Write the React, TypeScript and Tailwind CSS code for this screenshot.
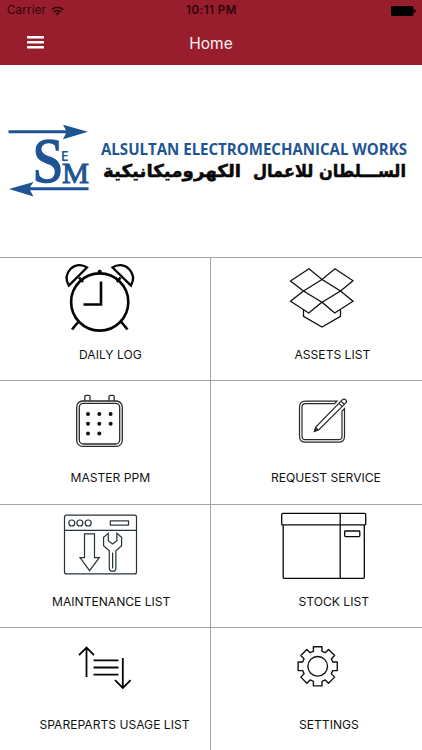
import type { ReactNode } from "react";

type TileProps = {
  label: string;
  labelClass: string;
  viewBox: string;
  right?: boolean;
  stroke?: string;
  strokeWidth?: number;
  children: ReactNode;
};

function Tile({ label, labelClass, viewBox, right, stroke = "#111", strokeWidth = 1.3, children }: TileProps) {
  return (
    <div className={`flex flex-col items-start overflow-hidden border-t border-[#a3a3a3] ${right ? "border-l" : ""}`}>
      <svg
        viewBox={viewBox}
        className={`h-[76px] w-[92px] shrink-0 ${right ? "ml-[64px]" : "ml-[54px]"}`}
        fill="none"
        stroke={stroke}
        strokeWidth={strokeWidth}
      >
        {children}
      </svg>
      <span className={`mt-[12px] whitespace-nowrap text-[12.1px] leading-[18px] text-[#111] ${labelClass}`}>{label}</span>
    </div>
  );
}

const gearPoints = Array.from({ length: 8 }, (_, i) => {
  const a = (i * Math.PI) / 4;
  return [
    [-4.3, -15],
    [-4.3, -19.6],
    [4.3, -19.6],
    [4.3, -15],
  ]
    .map(([x, y]) => `${(x * Math.cos(a) - y * Math.sin(a)).toFixed(2)},${(x * Math.sin(a) + y * Math.cos(a)).toFixed(2)}`)
    .join(" ");
}).join(" ");

function Logo() {
  return (
    <svg viewBox="0 65 422 192" className="h-[192px] w-full shrink-0" role="img">
      <g fill="#1f5493">
        <path d="M8.5 130.2H66L63 124.7L88 131.8L63 139.3L66 133.2H8.5Z" />
        <path d="M88.5 187.2H30L33.5 182L9 189L33.5 196.5L30 190.2H88.5Z" />
        <g fontFamily="'Liberation Serif', serif">
          <text x="32.5" y="182" fontSize="64" textLength="31" lengthAdjust="spacingAndGlyphs" stroke="#1f5493" strokeWidth="1.5">S</text>
          <text x="62" y="183" fontSize="30" textLength="27" lengthAdjust="spacingAndGlyphs" stroke="#1f5493" strokeWidth="1">M</text>
        </g>
        <text x="60.8" y="160.5" fontSize="14" fontFamily="'Open Sans', sans-serif" fontWeight="600">E</text>
        <text x="101" y="155" fontSize="16.8" textLength="306" lengthAdjust="spacingAndGlyphs" fontFamily="'Open Sans', sans-serif" fontWeight="700">ALSULTAN ELECTROMECHANICAL WORKS</text>
      </g>
      <g fill="#080808" stroke="#080808" strokeWidth=".5" fontFamily="'DejaVu Sans', sans-serif" fontWeight="700" fontSize="17.5" direction="rtl">
        <text x="406" y="176.5" textLength="153" lengthAdjust="spacingAndGlyphs">الســـلطان للاعمال</text>
        <text x="241" y="176.5" textLength="138" lengthAdjust="spacingAndGlyphs">الكهروميكانيكية</text>
      </g>
    </svg>
  );
}

export default function App() {
  return (
    <main className="flex h-[750px] w-[422px] flex-col overflow-hidden bg-white font-['Inter','Liberation_Sans',sans-serif]">
      <header className="flex h-[65px] shrink-0 flex-col bg-[#981e2d]">
        <div className="grid h-[22px] grid-cols-3 items-center pl-[7px] pr-[6px] text-[11.5px] text-[#2a0509]">
          <div className="flex items-center gap-[5px]">
            <span className="tracking-[0.2px]">Carrier</span>
            <svg viewBox="0 0 14 10" className="mb-px h-[10px] w-[13px]" fill="none" stroke="#2a0509" strokeWidth="1.7">
              <path d="M.8 3.5Q7-1.5 13.2 3.5M3 6Q7 2.8 11 6" />
              <path d="M4.8 7.3Q7 5.6 9.2 7.3L7 9.8Z" fill="#2a0509" stroke="none" />
            </svg>
          </div>
          <span className="text-center font-semibold tracking-[0.5px]">10:11 PM</span>
          <svg viewBox="0 0 25 10" className="mb-px h-[10px] w-[25px] justify-self-end">
            <rect width="22.5" height="10" rx="1.5" />
            <path d="M23.3 3Q25 3.3 25 5T23.3 7Z" />
          </svg>
        </div>
        <div className="grid h-[43px] grid-cols-[1fr_auto_1fr] items-center">
          <svg viewBox="0 0 17 13" className="mb-[2px] ml-[27px] h-[13px] w-[17px]" fill="#fff">
            <rect width="17" height="2.4" rx=".6" />
            <rect y="5" width="17" height="2.4" rx=".6" />
            <rect y="10" width="17" height="2.4" rx=".6" />
          </svg>
          <h1 className="text-[15.5px] text-[#fff1f2]">Home</h1>
          <span />
        </div>
      </header>

      <Logo />

      <section className="grid min-h-0 flex-1 auto-rows-[123.3px] grid-cols-[210px_1fr]">
        <Tile label="DAILY LOG" labelClass="ml-[79px]" viewBox="54 258 92 76" stroke="#050505" strokeWidth={2.6}>
          <circle cx="99.7" cy="302" r="28.6" />
          <path d="M101 281.5V304.5H83.5M79 321L72 329.5M120.5 321L127.5 329.5M79 277.5L83 282M120.5 277.5L117 282" />
          <path d="M87 267.5C82 264 75 264.3 70.5 269C65.7 274 65.7 280 68.8 285.5ZM112.5 267.5C117.5 264 124.5 264.3 129 269C133.8 274 134 280 131 285.5Z" strokeWidth="2.3" />
          <circle cx="99.7" cy="271.7" r="1.6" fill="#050505" strokeWidth="1" />
        </Tile>
        <Tile label="ASSETS LIST" labelClass="ml-[83.5px]" viewBox="275 258 92 76" right>
          <path d="M290.5 281L309 268.7L322 279.5L335 268.7L353 280.7L340.5 291L353 301.2L334.7 313L322 302.2L308.7 313L290.5 301.2L303.5 291ZM303.5 291L322 279.5L340.5 291L322 302.2ZM303.5 310V316.3L322 327L340.5 316.3V310" />
        </Tile>
        <Tile label="MASTER PPM" labelClass="ml-[70.5px]" viewBox="54 381.3 92 76" stroke="#292929">
          <rect x="76.7" y="401.3" width="45.6" height="45.4" rx="6" />
          <rect x="79.3" y="403.7" width="40.4" height="40.6" rx="4" />
          <path d="M84.8 401V397Q84.8 395.6 86.2 395.6H88.5Q90 395.6 90 397V401M109 401V397Q109 395.6 110.4 395.6H112.8Q114.2 395.6 114.2 397V401" />
          <g fill="#111" stroke="none">
            <circle cx="88" cy="414.3" r="2" />
            <circle cx="99.3" cy="414.3" r="2" />
            <circle cx="110.6" cy="414.3" r="2" />
            <circle cx="88" cy="424" r="2" />
            <circle cx="99.3" cy="424" r="2" />
            <circle cx="110.6" cy="424" r="2" />
            <circle cx="88" cy="433.7" r="2" />
            <circle cx="99.3" cy="433.7" r="2" />
          </g>
        </Tile>
        <Tile label="REQUEST SERVICE" labelClass="ml-[60px]" viewBox="275 381.3 92 76" right stroke="#292929">
          <path d="M337 401.5H305.5Q299.5 401.5 299.5 407.5V436.5Q299.5 442.5 305.5 442.5H338.5Q344.5 442.5 344.5 436.5V409L342 411.3V436.5Q342 440 338.5 440H305.5Q302 440 302 436.5V407.5Q302 404 305.5 404H334.7Z" strokeWidth="1.2" />
          <path d="M314.3 431.8L315.8 427.3L342.2 400.2Q344 398.5 345.7 400.1Q347.3 401.8 345.6 403.5L318.9 430ZM338.9 403.6L342.2 406.9M341 401.4L344.4 404.8" strokeWidth="1.2" />
          <path d="M314.1 432L315.8 427.3L318.9 430Z" fill="#292929" stroke="none" />
        </Tile>
        <Tile label="MAINTENANCE LIST" labelClass="ml-[52px]" viewBox="54 504.6 92 76" stroke="#273238" strokeWidth={1.2}>
          <rect x="64.5" y="514.8" width="72" height="58.7" rx="2" />
          <path d="M64.5 530H136.5M84.5 533.5H94.5V557.3H99.3L89.6 570.3L80 557.3H84.5Z" />
          <circle cx="71.8" cy="522.6" r="3" />
          <circle cx="79.9" cy="522.6" r="3" />
          <circle cx="88.2" cy="522.6" r="3" />
          <rect x="110.3" y="520.5" width="18.2" height="4.2" />
          <path d="M108.3 533L103.6 537V545.3L109.3 550.3V567.5Q109.3 570.8 112.6 570.8T115.9 567.5V550.3L121.6 545.3V537L116.9 533V540.3L112.6 543.5L108.3 540.3ZM112.6 552V568" />
        </Tile>
        <Tile label="STOCK LIST" labelClass="ml-[87.5px]" viewBox="275 504.6 92 76" right stroke="#080808">
          <rect x="281.7" y="513" width="84" height="11.5" rx="1" />
          <path d="M283.2 524.5V576.8Q283.2 578 284.4 578H363Q364.3 578 364.3 576.8V524.5M340.2 513V578" />
          <rect x="344.7" y="530.6" width="15.1" height="5.6" rx=".8" />
        </Tile>
        <Tile label="SPAREPARTS USAGE LIST" labelClass="ml-[39.5px]" viewBox="54 627.9 92 76" stroke="#050505" strokeWidth={1.8}>
          <path d="M86.5 677V647.5M79 655L86.5 647.5L94 655M93.5 660.2H118.5M93.5 667.4H118.5M93.5 674.6H118.5M122.8 658V687.5M115 680L122.8 687.8L130.6 680" />
        </Tile>
        <Tile label="SETTINGS" labelClass="ml-[88px]" viewBox="275 627.9 92 76" right strokeWidth={1.4}>
          <g transform="translate(317.7 666.2)">
            <polygon points={gearPoints} strokeLinejoin="round" />
            <circle r="9.8" />
          </g>
        </Tile>
      </section>
    </main>
  );
}
